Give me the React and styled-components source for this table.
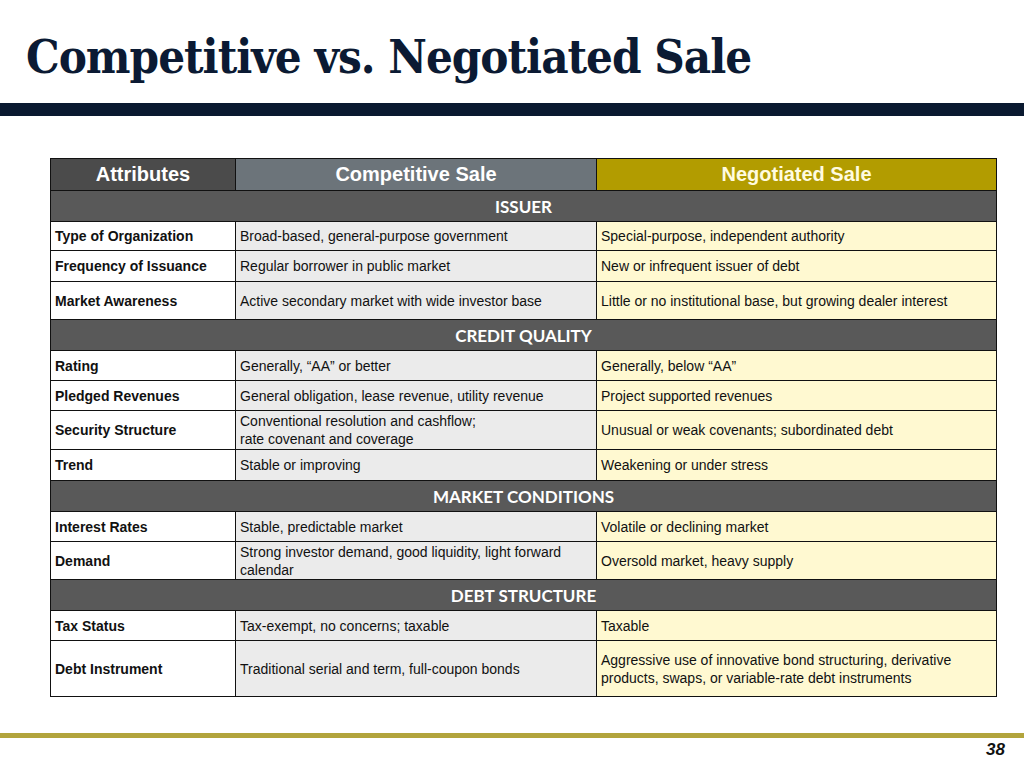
import React from "react";
import styled, { createGlobalStyle } from "styled-components";

const GlobalStyle = createGlobalStyle`
  html, body {
    margin: 0;
    padding: 0;
    background: #ffffff;
  }
`;

const Slide = styled.div`
  width: 1024px;
  height: 768px;
  position: relative;
  overflow: hidden;
  background: #ffffff;
  font-family: "Liberation Sans", Arial, sans-serif;
  display: flex;
  flex-direction: column;
`;

const Title = styled.h1`
  margin: 0;
  padding: 29px 0 0 26px;
  height: 75px;
  box-sizing: border-box;
  font-family: "DejaVu Serif", "Liberation Serif", serif;
  font-stretch: condensed;
  font-weight: bold;
  font-size: 47px;
  line-height: 56px;
  color: #0b1a33;
  letter-spacing: -1px;
`;

const NavyBar = styled.div`
  margin-top: 28px;
  height: 13px;
  background: #0a1930;
`;

const TableWrap = styled.div`
  padding: 42px 28px 0 50px;
`;

const Table = styled.table`
  width: 946px;
  border-collapse: collapse;
  table-layout: fixed;
  border: 1.5px solid #111;
`;

const headBg = {
  attr: "#4b4b4b",
  comp: "#6c747a",
  neg: "#b29c00",
};

const HeadCell = styled.th`
  height: 31px;
  padding: 0;
  background: ${(p) => headBg[p.$kind]};
  color: ${(p) => (p.$kind === "neg" ? "#fffbe0" : "#ffffff")};
  font-size: 20px;
  font-weight: bold;
  text-align: center;
  border: 1.5px solid #111;
`;

const SectionCell = styled.td`
  height: 30px;
  padding: 0;
  background: #595959;
  color: #ffffff;
  font-family: Lato, "Open Sans", sans-serif;
  font-weight: bold;
  font-size: 17px;
  text-align: center;
  border: 1.5px solid #111;
`;

const cellBg = {
  attr: "#ffffff",
  comp: "#ebebeb",
  neg: "#fff9d1",
};

const Cell = styled.td`
  height: ${(p) => p.$h}px;
  padding: 0 4px;
  box-sizing: border-box;
  background: ${(p) => cellBg[p.$kind]};
  color: #111;
  font-size: 14px;
  line-height: 18px;
  font-weight: ${(p) => (p.$kind === "attr" ? "bold" : "normal")};
  border: 1.5px solid #111;
  vertical-align: middle;
`;

const Footer = styled.div`
  margin-top: auto;
  display: flex;
  flex-direction: column;
`;

const GoldLine = styled.div`
  height: 5px;
  background: #b2a43c;
`;

const PageNum = styled.div`
  height: 30px;
  padding-right: 19px;
  text-align: right;
  font-size: 17px;
  font-weight: bold;
  font-style: italic;
  line-height: 24px;
  color: #111;
`;

const sections = [
  {
    title: "ISSUER",
    rows: [
      ["Type of Organization", "Broad-based, general-purpose government", "Special-purpose, independent authority", 29],
      ["Frequency of Issuance", "Regular borrower in public market", "New or infrequent issuer of debt", 31],
      ["Market Awareness", "Active secondary market with wide investor base", "Little or no institutional base, but growing dealer interest", 38],
    ],
  },
  {
    title: "CREDIT QUALITY",
    rows: [
      ["Rating", "Generally, \u201cAA\u201d or better", "Generally, below \u201cAA\u201d", 30],
      ["Pledged Revenues", "General obligation, lease revenue, utility revenue", "Project supported revenues", 30],
      ["Security Structure", <>Conventional resolution and cashflow;<br />rate covenant and coverage</>, "Unusual or weak covenants; subordinated debt", 39],
      ["Trend", "Stable or improving", "Weakening or under stress", 31],
    ],
  },
  {
    title: "MARKET CONDITIONS",
    rows: [
      ["Interest Rates", "Stable, predictable market", "Volatile or declining market", 30],
      ["Demand", "Strong investor demand, good liquidity, light forward calendar", "Oversold market, heavy supply", 38],
    ],
  },
  {
    title: "DEBT STRUCTURE",
    rows: [
      ["Tax Status", "Tax-exempt, no concerns; taxable", "Taxable", 30],
      ["Debt Instrument", "Traditional serial and term, full-coupon bonds", "Aggressive use of innovative bond structuring, derivative products, swaps, or variable-rate debt instruments", 56],
    ],
  },
];

export default function App() {
  return (
    <Slide>
      <GlobalStyle />
      <Title>Competitive vs. Negotiated Sale</Title>
      <NavyBar />
      <TableWrap>
        <Table>
          <colgroup>
            <col style={{ width: 185 }} />
            <col style={{ width: 361 }} />
            <col style={{ width: 400 }} />
          </colgroup>
          <thead>
            <tr>
              <HeadCell $kind="attr">Attributes</HeadCell>
              <HeadCell $kind="comp">Competitive Sale</HeadCell>
              <HeadCell $kind="neg">Negotiated Sale</HeadCell>
            </tr>
          </thead>
          <tbody>
            {sections.map((s) => (
              <React.Fragment key={s.title}>
                <tr>
                  <SectionCell colSpan={3}>{s.title}</SectionCell>
                </tr>
                {s.rows.map(([a, c, n, h]) => (
                  <tr key={a}>
                    <Cell $kind="attr" $h={h}>{a}</Cell>
                    <Cell $kind="comp" $h={h}>{c}</Cell>
                    <Cell $kind="neg" $h={h}>{n}</Cell>
                  </tr>
                ))}
              </React.Fragment>
            ))}
          </tbody>
        </Table>
      </TableWrap>
      <Footer>
        <GoldLine />
        <PageNum>38</PageNum>
      </Footer>
    </Slide>
  );
}
